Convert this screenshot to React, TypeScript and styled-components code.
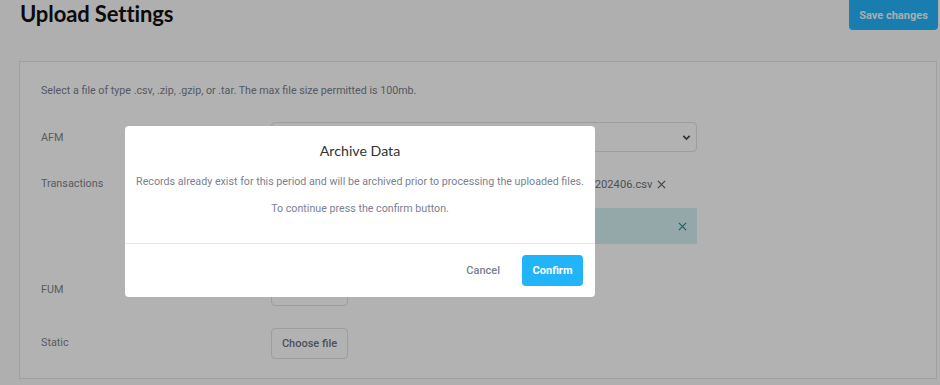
import React from "react";
import styled, { createGlobalStyle } from "styled-components";

const Global = createGlobalStyle`
  html, body { margin: 0; padding: 0; background: #fbfbfb; }
  body { font-family: Roboto, "Liberation Sans", sans-serif; overflow: hidden; }
  * { box-sizing: border-box; }
`;

const Page = styled.div`
  width: 940px;
  height: 385px;
  padding: 0 2px 0 19px;
  position: relative;
`;

const Header = styled.div`
  display: flex;
  justify-content: space-between;
  align-items: flex-start;
  height: 61px;
`;

const Title = styled.h1`
  margin: 0 0 0 1px;
  font-family: Lato, "Open Sans", sans-serif;
  font-weight: 700;
  font-size: 22px;
  line-height: 28px;
  color: #111;
  letter-spacing: -0.1px;
`;

const SaveButton = styled.button`
  margin-top: -4px;
  width: 89px;
  height: 34px;
  padding: 4px 0 0;
  border: none;
  border-radius: 4px;
  background: #25b5fb;
  color: #eef7fc;
  font-family: Roboto, sans-serif;
  font-weight: 700;
  font-size: 11px;
`;

const Card = styled.div`
  width: 918px;
  height: 318px;
  background: #fff;
  border: 1px solid #e6e6e6;
  padding: 21px 21px 20px 21px;
`;

const Intro = styled.p`
  margin: 0 0 24px;
  font-size: 10.7px;
  line-height: 16px;
  color: #7b8190;
`;

const Row = styled.div<{ $mt?: number }>`
  display: grid;
  grid-template-columns: 230px 426px;
  align-items: start;
  margin-top: ${(p) => p.$mt ?? 0}px;
`;

const Label = styled.div`
  font-size: 10.8px;
  line-height: 30px;
  color: #7f848c;
`;

const Select = styled.div`
  height: 30px;
  margin-top: -1px;
  border: 1px solid #e2e2e2;
  border-radius: 4px;
  display: flex;
  align-items: center;
  justify-content: flex-end;
  padding-right: 5px;
  color: #555;
`;

const Control = styled.div`
  display: flex;
  flex-direction: column;
  gap: 9px;
`;

const FileLine = styled.div`
  display: flex;
  align-items: center;
  gap: 7px;
  font-size: 11.2px;
  color: #6f737a;
  height: 30px;
`;

const FileName = styled.span`
  white-space: pre;
`;

const ChooseButton = styled.button`
  width: 77px;
  height: 31px;
  border: 1px solid #e2e2e2;
  border-radius: 4px;
  background: #fff;
  font-family: Roboto, sans-serif;
  font-weight: 500;
  font-size: 11px;
  color: #6f7580;
  padding: 0;
`;

const Remove = styled.span`
  display: flex;
  margin-left: -2px;
`;

const Alert = styled.div`
  height: 36px;
  background: #d4f1f4;
  display: flex;
  align-items: center;
  justify-content: flex-end;
  padding-right: 10px;
`;

const Overlay = styled.div`
  position: fixed;
  inset: 0;
  background: rgba(0, 0, 0, 0.3);
`;

const Modal = styled.div`
  position: fixed;
  left: 125px;
  top: 126px;
  width: 470px;
  height: 171px;
  background: #fff;
  border-radius: 4px;
  display: flex;
  flex-direction: column;
`;

const ModalBody = styled.div`
  height: 118px;
  border-bottom: 1px solid #e8e8e8;
  padding-top: 15px;
  text-align: center;
`;

const ModalTitle = styled.h2`
  margin: 0 0 13px;
  font-family: Lato, "Open Sans", sans-serif;
  font-weight: 400;
  font-size: 14.2px;
  line-height: 20px;
  color: #333;
`;

const ModalText = styled.p`
  margin: 0 0 11px;
  font-size: 10.7px;
  line-height: 16px;
  color: #7b8192;
  white-space: nowrap;
`;

const ModalFooter = styled.div`
  flex: 1;
  display: flex;
  align-items: center;
  justify-content: flex-end;
  gap: 22px;
  padding-right: 12px;
`;

const CancelButton = styled.button`
  border: none;
  background: none;
  font-family: Roboto, sans-serif;
  font-size: 11px;
  font-weight: 500;
  color: #7a8090;
  padding: 0;
`;

const ConfirmButton = styled.button`
  width: 61px;
  height: 31px;
  border: none;
  border-radius: 4px;
  background: #22b4f8;
  color: #fff;
  font-family: Roboto, sans-serif;
  font-weight: 700;
  font-size: 11px;
  padding: 0;
`;

const Chevron = () => (
  <svg width="9" height="9" viewBox="0 0 10 10">
    <path d="M1.5 3.2 L5 6.7 L8.5 3.2" stroke="#444" strokeWidth="1.8" fill="none" />
  </svg>
);

const CloseX = ({ c }: { c: string }) => (
  <svg width="9" height="9" viewBox="0 0 10 10">
    <path d="M1 1 L9 9 M9 1 L1 9" stroke={c} strokeWidth="1.4" />
  </svg>
);

export default function App() {
  return (
    <>
      <Global />
      <Page>
        <Header>
          <Title>Upload Settings</Title>
          <SaveButton>Save changes</SaveButton>
        </Header>
        <Card>
          <Intro>
            Select a file of type .csv, .zip, .gzip, or .tar. The max file size permitted is 100mb.
          </Intro>
          <Row>
            <Label>AFM</Label>
            <Select>
              <Chevron />
            </Select>
          </Row>
          <Row $mt={16}>
            <Label>Transactions</Label>
            <Control>
              <FileLine>
                <ChooseButton>Choose file</ChooseButton>
                <FileName>AFM_Transactions_Monthly_Extract_Final_Copy 202406.csv</FileName>
                <Remove>
                  <CloseX c="#5f636a" />
                </Remove>
              </FileLine>
              <Alert>
                <CloseX c="#2f8c8c" />
              </Alert>
            </Control>
          </Row>
          <Row $mt={31}>
            <Label>FUM</Label>
            <ChooseButton>Choose file</ChooseButton>
          </Row>
          <Row $mt={22}>
            <Label>Static</Label>
            <ChooseButton>Choose file</ChooseButton>
          </Row>
        </Card>
        <Overlay />
        <Modal>
          <ModalBody>
            <ModalTitle>Archive Data</ModalTitle>
            <ModalText>
              Records already exist for this period and will be archived prior to processing the uploaded files.
            </ModalText>
            <ModalText>To continue press the confirm button.</ModalText>
          </ModalBody>
          <ModalFooter>
            <CancelButton>Cancel</CancelButton>
            <ConfirmButton>Confirm</ConfirmButton>
          </ModalFooter>
        </Modal>
      </Page>
    </>
  );
}
